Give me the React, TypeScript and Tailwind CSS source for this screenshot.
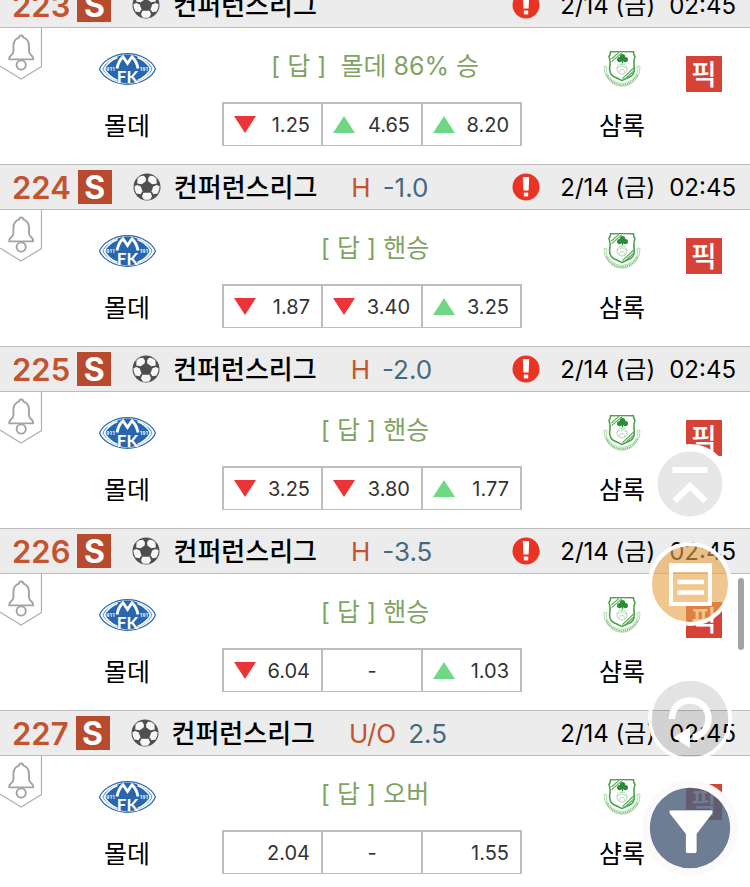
import React from "react";

type Trend = "up" | "down" | "none";
type Odd = { trend: Trend; value: string };
type Match = {
  no: string;
  kind?: string;
  line?: string;
  alert: boolean;
  answer: string;
  odds: Odd[];
};

const matches: Match[] = [
  {
    no: "223",
    alert: true,
    answer: "[ 답 ]\u00a0 몰데 86% 승",
    odds: [
      { trend: "down", value: "1.25" },
      { trend: "up", value: "4.65" },
      { trend: "up", value: "8.20" },
    ],
  },
  {
    no: "224",
    kind: "H",
    line: "-1.0",
    alert: true,
    answer: "[ 답 ] 핸승",
    odds: [
      { trend: "down", value: "1.87" },
      { trend: "down", value: "3.40" },
      { trend: "up", value: "3.25" },
    ],
  },
  {
    no: "225",
    kind: "H",
    line: "-2.0",
    alert: true,
    answer: "[ 답 ] 핸승",
    odds: [
      { trend: "down", value: "3.25" },
      { trend: "down", value: "3.80" },
      { trend: "up", value: "1.77" },
    ],
  },
  {
    no: "226",
    kind: "H",
    line: "-3.5",
    alert: true,
    answer: "[ 답 ] 핸승",
    odds: [
      { trend: "down", value: "6.04" },
      { trend: "none", value: "-" },
      { trend: "up", value: "1.03" },
    ],
  },
  {
    no: "227",
    kind: "U/O",
    line: "2.5",
    alert: false,
    answer: "[ 답 ] 오버",
    odds: [
      { trend: "none", value: "2.04" },
      { trend: "none", value: "-" },
      { trend: "none", value: "1.55" },
    ],
  },
];

function SoccerBall() {
  return (
    <svg viewBox="0 0 28 28" className="size-7 shrink-0" aria-hidden="true">
      <circle cx="14" cy="14" r="13.5" fill="#4f4f4f" />
      <g fill="#f7f7f7">
        <path d="M4.6 5.2 Q7.6 2.4 11 2.8 L13 5.4 L12.6 8.6 L8.8 11.2 L4.2 10.6 Z" />
        <path d="M23.4 5.2 Q20.4 2.4 17 2.8 L15 5.4 L15.4 8.6 L19.2 11.2 L23.8 10.6 Z" />
        <path d="M1.4 13.2 L4.4 12 L7.8 13.6 L9.400 18.2 L7.6 21.2 L3.4 20.6 Q1.4 17 1.4 13.2 Z" />
        <path d="M26.6 13.2 L23.6 12 L20.2 13.6 L18.600 18.2 L20.4 21.2 L24.6 20.6 Q26.6 17 26.6 13.2 Z" />
        <path d="M10.4 19.8 L17.6 19.8 L19 23.2 L17.2 26.4 Q14 27 10.8 26.4 L9 23.2 Z" />
      </g>
    </svg>
  );
}

function AlertMark() {
  return (
    <svg viewBox="0 0 28 28" className="size-7 shrink-0" role="img" aria-label="알림">
      <circle cx="14" cy="14" r="13.5" fill="#eb3323" />
      <path d="M10.8 4 H17.2 L16.6 17.6 H11.4 Z" fill="#fff" />
      <rect x="11.8" y="19.6" width="4.4" height="3.8" fill="#fff" />
    </svg>
  );
}

function BellTab() {
  return (
    <button type="button" aria-label="알림 설정" className="block h-[52px] w-[42px]">
      <svg viewBox="0 0 42 52" className="h-[52px] w-[42px]" fill="none">
        <path d="M41.5 0 V38.5 L21 51 L0 38" stroke="#b0b0b0" strokeWidth="1.2" />
        <g stroke="#a3a3a3" strokeWidth="1.9" strokeLinejoin="round">
          <path d="M19.2 9.4 V8.4 Q21.2 6.6 23.2 8.4 V9.4 Q29 11.4 29 18 V23.5 Q29.2 26 31.6 27.6 Q33.4 28.8 33.2 31.4 H9.2 Q9 28.8 10.8 27.6 Q13.2 26 13.4 23.5 V18 Q13.4 11.4 19.2 9.4 Z" />
          <circle cx="21.2" cy="37" r="4.6" />
        </g>
      </svg>
    </button>
  );
}

function MoldeCrest() {
  return (
    <svg viewBox="0 0 57 32" className="h-8 w-[57px]" role="img" aria-label="몰데 FK">
      <path
        d="M0.6 16 C3 9 14 0.6 28.5 0.6 C43 0.6 54 9 56.4 16 C54 23 43 31.4 28.5 31.4 C14 31.4 3 23 0.6 16 Z"
        fill="#fff"
        stroke="#2c69b0"
        strokeWidth="1.2"
      />
      <path d="M3.6 16 C6 10 17 1.6 28.5 1.600 C40 1.6 51 10 53.4 16 C51 22 40 30.4 28.5 30.4 C17 30.4 6 22 3.6 16 Z" fill="#2866b0" />
      <path d="M5 16 C9 9.500 13 6.500 18.500 4.600 M52 16 C48 9.500 44 6.500 38.500 4.600" fill="none" stroke="#fff" strokeWidth="1.600" />
      <path d="M5 16 C9 22.500 13 25.500 18.500 27.400 M52 16 C48 22.500 44 25.500 38.500 27.400" fill="none" stroke="#fff" strokeWidth="1.600" />
      <path d="M18 15.500 Q19.500 7.500 24 3.800 L28.500 10.400 L33 3.800 Q37.500 7.500 39 15.500" fill="none" stroke="#fff" strokeWidth="2.800" />
      <g fill="#fff" textAnchor="middle" fontWeight="700">
        <text x="28.5" y="29.500" fontSize="17" fontFamily="Lato, 'Liberation Sans', sans-serif">FK</text>
        <text x="10.5" y="18" fontSize="5" fontFamily="Roboto, sans-serif">1911</text>
        <text x="46.5" y="18" fontSize="5" fontFamily="Roboto, sans-serif">1911</text>
      </g>
    </svg>
  );
}

function ShamrockCrest() {
  return (
    <svg viewBox="0 0 38 36" className="h-9 w-[38px]" role="img" aria-label="샴록 로버스" fill="none">
      <path d="M1 15 L4 15.5 L3.4 21 Q8 31.5 19 32.5 Q30 31.5 34.6 21 L34 15.5 L37 15 L36.4 22 Q31 35 19 35.4 Q7 35 1.6 22 Z" fill="#edf7ed" stroke="#a8d5a8" strokeWidth="0.8" />
      <path d="M3.4 23.5 Q9 33.6 19 34 Q29 33.6 34.6 23.5" stroke="#6fb56f" strokeWidth="1.6" strokeDasharray="1 0.9" />
      <path
        d="M7.6 0.8 Q19 0.2 30.400 0.8 Q30.600 4 32 5.5 Q30.600 9 31 14 Q32.600 22.500 27.5 25.5 Q23 27.5 19 29.6 Q15 27.5 10.5 25.5 Q5.400 22.500 7 14 Q7.400 9 6 5.5 Q7.400 4 7.600 0.8 Z"
        fill="#fff"
        stroke="#4aa44a"
        strokeWidth="1.6"
      />
      <path d="M8.4 8 L16 1.4 M8.6 10.6 L19 1.6 M19.4 27.6 L31 16.8 M23 27 L31.4 19.4" stroke="#5bad5b" strokeWidth="1.2" />
      <g fill="#2d8c36">
        <circle cx="19.5" cy="5.6" r="2.700" />
        <circle cx="16.6" cy="8.6" r="2.600" />
        <circle cx="22.4" cy="8.6" r="2.600" />
        <rect x="18.9" y="8" width="1.2" height="4.2" />
      </g>
      <circle cx="19" cy="18" r="5" stroke="#a5cfa5" strokeWidth="0.9" />
      <path d="M14.4 17 L19 15 L23.6 17 M16 21.8 L17.4 18.6 H20.6 L22 21.8 M19 13 V15" stroke="#a5cfa5" strokeWidth="0.7" />
    </svg>
  );
}

function Team({ name, children }: { name: string; children: React.ReactNode }) {
  return (
    <div className="flex flex-col items-center pt-[23px] text-black">
      <div className="flex h-9 items-center">{children}</div>
      <span className="mt-[19px] text-[25px] leading-10">{name}</span>
    </div>
  );
}

function OddCell({ odd }: { odd: Odd }) {
  const dash = odd.value === "-";
  return (
    <td className="border-t-2 border-b border-l-2 border-[#bdbdbd] p-0 first:w-[99px] last:w-[101px] last:border-r-2">
      <div className={dash ? "flex h-[41px] items-center justify-center" : "flex h-[41px] items-center justify-between pr-[11px] pl-[10px]"}>
        {odd.trend === "none" && !dash && <span />}
        {odd.trend !== "none" && (
          <svg viewBox="0 0 22 17" className="h-[17px] w-[22px]" role="img" aria-label={odd.trend === "up" ? "상승" : "하락"}>
            {odd.trend === "up" ? <path d="M11 0 L22 17 H0 Z" fill="#6fd884" /> : <path d="M0 0 H22 L11 17 Z" fill="#ec3338" />}
          </svg>
        )}
        <span className="text-xl text-[#333]">{odd.value}</span>
      </div>
    </td>
  );
}

function MatchRow({ match }: { match: Match }) {
  return (
    <article>
      <header className="flex h-[46px] items-center border-y border-[#bdbdbd] bg-[#ececec] pr-[14px] pl-3 whitespace-nowrap">
        <span className="text-[31px] leading-none font-semibold text-[#c4532f]">{match.no}</span>
        <span className="ml-[7px] flex size-[34px] items-center justify-center bg-[#b84b2d] pt-0.5 text-[32px] leading-none font-bold text-white">S</span>
        <span className="ml-[21px]">
          <SoccerBall />
        </span>
        <span className="ml-[13px] pt-0.5 text-[26px] leading-none font-medium text-black">컨퍼런스리그</span>
        {match.kind && (
          <span className="ml-[34px] flex gap-3 pt-0.5 text-[26px] leading-none">
            <span className="text-[#c4532f]">{match.kind}</span>
            <span className="text-[#456a80]">{match.line}</span>
          </span>
        )}
        <div className="ml-auto flex items-center gap-5">
          {match.alert && <AlertMark />}
          <time className="flex gap-[14px] pt-0.5 text-[24px] leading-none text-black">
            <span>2/14 (금)</span>
            <span>02:45</span>
          </time>
        </div>
      </header>
      <div className="grid h-[136px] grid-cols-[42px_170px_1fr_154px_64px]">
        <div>
          <BellTab />
        </div>
        <Team name="몰데">
          <MoldeCrest />
        </Team>
        <div className="flex flex-col items-center pt-[18px]">
          <p className="pl-1.5 text-[25px] leading-10 text-[#7fa363]">{match.answer}</p>
          <table className="mt-4 w-[300px] table-fixed border-separate border-spacing-0">
            <tbody>
              <tr>
                {match.odds.map((odd, i) => (
                  <OddCell key={i} odd={odd} />
                ))}
              </tr>
            </tbody>
          </table>
        </div>
        <div className="pl-[26px]">
          <Team name="샴록">
            <ShamrockCrest />
          </Team>
        </div>
        <div className="pt-7">
          <button type="button" className="flex size-9 items-center justify-center bg-[#d64236] pt-0.5 text-[28px] leading-none font-medium text-white">
            픽
          </button>
        </div>
      </div>
    </article>
  );
}

function FloatingButtons() {
  return (
    <div className="fixed right-3 bottom-[11px] flex w-24 flex-col items-center">
      <button type="button" aria-label="맨 위로" className="size-20 rounded-full">
        <svg viewBox="0 0 80 80" className="size-20" fill="none">
          <circle cx="40" cy="40" r="36" stroke="#fff" strokeWidth="8" />
          <circle cx="40" cy="40" r="32.5" fill="#e7e7e7" />
          <path d="M22.5 26 H57.5" stroke="#fff" strokeWidth="6" />
          <path d="M24.5 57 L40 42 L55.5 57" stroke="#fff" strokeWidth="6" />
        </svg>
      </button>
      <button type="button" aria-label="목록" className="mt-[18px] size-[84px] rounded-full">
        <svg viewBox="0 0 84 84" className="size-[84px]" fill="none">
          <circle cx="42" cy="42" r="38.5" fill="#e6a44a" fillOpacity="0.62" />
          <circle cx="42" cy="42" r="40" stroke="#fff" strokeWidth="4" />
          <path d="M23 23 H62 V62 H23 Z" stroke="#fff" strokeWidth="4" />
          <path d="M21 25.5 H64" stroke="#fff" strokeWidth="9" />
          <path d="M29.5 40 H56 M29.5 50.5 H56" stroke="#fff" strokeWidth="4.5" />
        </svg>
      </button>
      <button type="button" aria-label="새로고침" className="mt-[51px] size-[84px] rounded-full">
        <svg viewBox="0 0 84 84" className="size-[84px]" fill="none">
          <circle cx="42" cy="42" r="38.5" fill="#000" fillOpacity="0.11" />
          <circle cx="42" cy="42" r="40.2" stroke="#fff" strokeWidth="3.6" />
          <path d="M24 42 C24 31 31.500 23.500 42 23.500 C53 23.500 60.500 31.500 60.500 42 C60.500 51 54 58.500 45 60.500" stroke="#fff" strokeWidth="6.5" />
          <path d="M25.500 60.5 L42 50 V71 Z" fill="#fff" />
        </svg>
      </button>
      <button type="button" aria-label="필터" className="mt-[19px] size-24 rounded-full">
        <svg viewBox="0 0 96 96" className="size-24" fill="none">
          <circle cx="48" cy="48" r="40.5" fill="#4c607c" fillOpacity="0.82" />
          <circle cx="48" cy="48" r="44" stroke="#fbf9fa" strokeWidth="7.5" />
          <path
            d="M28.5 30 H69.5 Q72 31 70.5 33.5 L55 54 V71.5 Q55 73.5 53 73.5 H45.5 Q43.5 73.5 43.5 71.5 V54 L27.5 33.5 Q26 31 28.5 30 Z"
            fill="#fff"
            stroke="#566579"
            strokeWidth="0.6"
          />
        </svg>
      </button>
    </div>
  );
}

export default function App() {
  return (
    <main className="h-screen overflow-hidden bg-white font-['Inter','Noto_Sans_CJK_KR',sans-serif]">
      <div className="-mt-[18px]">
        {matches.map((m) => (
          <MatchRow key={m.no} match={m} />
        ))}
      </div>
      <div className="fixed top-[578px] right-1.5 h-[72px] w-1.5 rounded-full bg-[#a3a3a3]" />
      <FloatingButtons />
    </main>
  );
}
